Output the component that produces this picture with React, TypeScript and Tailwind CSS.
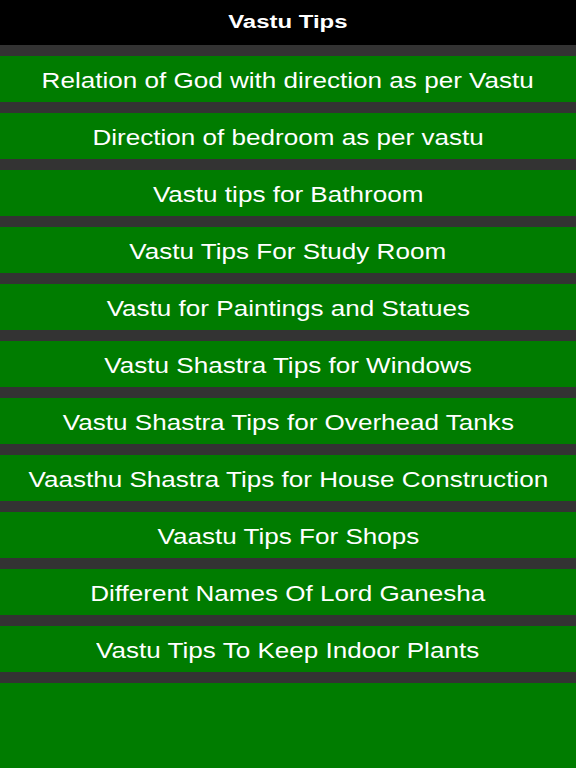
const topics = [
  "Relation of God with direction as per Vastu",
  "Direction of bedroom as per vastu",
  "Vastu tips for Bathroom",
  "Vastu Tips For Study Room",
  "Vastu for Paintings and Statues",
  "Vastu Shastra Tips for Windows",
  "Vastu Shastra Tips for Overhead Tanks",
  "Vaasthu Shastra Tips for House Construction",
  "Vaastu Tips For Shops",
  "Different Names Of Lord Ganesha",
  "Vastu Tips To Keep Indoor Plants",
];

export default function App() {
  return (
    <div className="flex flex-col h-[768px] w-full bg-[#007c00] font-['Liberation_Sans',Arial,sans-serif] text-white">
      <header className="h-[45px] shrink-0 bg-black flex items-center justify-center">
        <h1 className="text-[18px] font-bold scale-x-[1.33]">Vastu Tips</h1>
      </header>
      <ul>
        {topics.map((t) => (
          <li key={t} className="border-t-[11.2px] border-[#333333]">
            <button className="w-full h-[46px] pt-[3px] flex items-center justify-center bg-[#007c00]">
              <span className="text-[22px] whitespace-nowrap scale-x-[1.185]">{t}</span>
            </button>
          </li>
        ))}
        <li className="h-[11.2px] bg-[#333333]" />
      </ul>
    </div>
  );
}
